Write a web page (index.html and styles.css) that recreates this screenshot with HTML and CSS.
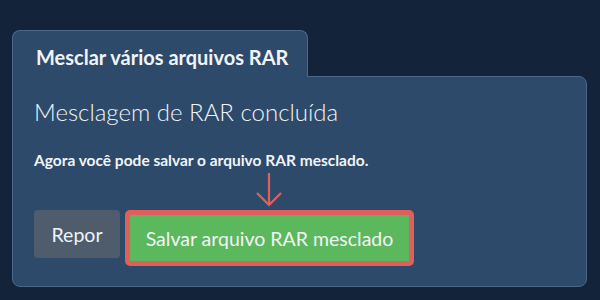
FILE: index.html
```html
<!doctype html>
<html lang="pt">
  <head>
    <meta charset="UTF-8" />
    <title>Mesclar vários arquivos RAR</title>
    <link rel="stylesheet" href="styles.css">
  </head>
  <body>
    <div class="merger">
      <div class="tab-row">
        <div class="tab">Mesclar vários arquivos RAR</div>
      </div>
      <div class="card">
        <h2 class="status">Mesclagem de RAR concluída</h2>
        <p class="hint">Agora você pode salvar o arquivo RAR mesclado.</p>
        <div class="actions">
          <button class="btn btn-reset">Repor</button>
          <div class="save-wrap">
            <svg class="pointer" width="28" height="36" viewBox="0 0 28 36">
              <path d="M14 1 V33 M2 21 L14 33 L26 21" fill="none" stroke="#e0615b" stroke-width="2.2" />
            </svg>
            <button class="btn btn-save">Salvar arquivo RAR mesclado</button>
          </div>
        </div>
      </div>
    </div>
  </body>
</html>
```
FILE: styles.css
```css
:root {
  --page-bg: #12233a;
  --card-bg: #2d4a6a;
  --card-border: #4d6887;
  --text: #f1f4f7;
  --gray-btn: #4e5c6c;
  --green: #5cb85c;
  --red: #df605a;
}

* {
  box-sizing: border-box;
  margin: 0;
  padding: 0;
}

body {
  background-color: var(--page-bg);
  font-family: Lato, "Open Sans", sans-serif;
  color: var(--text);
  padding: 30px 13px 0 12px;
}

.tab-row {
  display: flex;
  position: relative;
  z-index: 1;
  margin-bottom: -1px;
}

.tab {
  width: 296px;
  height: 47px;
  padding: 14px 0 0 23px;
  background: var(--card-bg);
  border: 1px solid var(--card-border);
  border-bottom: none;
  border-radius: 8px 8px 0 0;
  font-size: 20px;
  font-weight: 700;
  line-height: 24px;
}

.card {
  height: 211px;
  background: var(--card-bg);
  border: 1px solid var(--card-border);
  border-radius: 0 8px 8px 8px;
  padding: 20px 21px 0 21px;
}

.status {
  font-size: 24px;
  font-weight: 300;
  line-height: 30px;
  margin-bottom: 23px;
}

.hint {
  font-size: 15.5px;
  font-weight: 700;
  line-height: 20px;
}

.actions {
  display: flex;
  align-items: flex-start;
  gap: 5px;
  margin-top: 40px;
}

.save-wrap {
  position: relative;
}

.pointer {
  position: absolute;
  left: 130px;
  top: -38px;
}

.btn {
  font-family: Lato, "Open Sans", sans-serif;
  font-size: 19.5px;
  color: var(--text);
  border: none;
  border-radius: 4px;
  cursor: pointer;
}

.btn-reset {
  width: 86px;
  height: 48px;
  background: var(--gray-btn);
}

.btn-save {
  width: 289px;
  height: 56px;
  background: var(--green);
  border: 5px solid var(--red);
  border-radius: 5px;
  padding: 0 15px;
}
```
